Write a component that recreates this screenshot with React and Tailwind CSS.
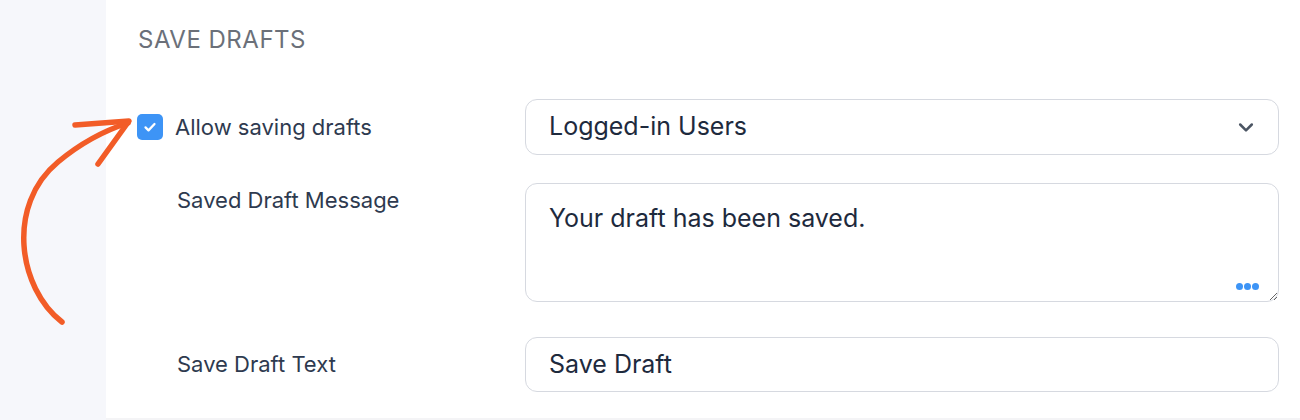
import React from 'react';

function Arrow() {
  return (
    <svg className="absolute left-0 top-0 pointer-events-none" width="170" height="340" viewBox="0 0 170 340" fill="none">
      <path d="M62 322 C18 288 6 205 58 162 C82 142 106 130 128 123" stroke="#f25c27" strokeWidth="5.5" strokeLinecap="round" />
      <path d="M75 125 L129 121 L98 164" stroke="#f25c27" strokeWidth="5.5" strokeLinecap="round" strokeLinejoin="round" />
    </svg>
  );
}

export default function App() {
  return (
    <div className="relative flex w-[1300px] h-[420px] overflow-hidden font-['Inter','Liberation_Sans',sans-serif]">
      <div className="w-[106px] shrink-0 bg-[#f6f7fb]" />
      <div className="flex-1 flex flex-col bg-white">
        <div className="flex-1 pl-[31px] pr-[21px]">
          <h2 className="mt-[26px] ml-[1px] text-[24px] leading-[28px] text-[#6b7079] tracking-[0.5px]">SAVE DRAFTS</h2>

          {/* Allow saving drafts */}
          <div className="flex items-center mt-[45px]">
            <div className="w-[388px] flex items-center gap-[12px]">
              <div className="w-[26px] h-[26px] rounded-[5px] bg-[#3d94f6] flex items-center justify-center">
                <svg width="18" height="18" viewBox="0 0 24 24" fill="none" stroke="white" strokeWidth="3" strokeLinecap="round" strokeLinejoin="round">
                  <path d="M6 12.5l4 4L18 8" />
                </svg>
              </div>
              <span className="text-[22px] text-[#2e3a4f]">Allow saving drafts</span>
            </div>
            <div className="flex-1 h-[56px] border border-[#d6d9e0] rounded-[12px] flex items-center justify-between pl-[23px] pr-[22px]">
              <span className="text-[25px] text-[#1e2a3d]">Logged-in Users</span>
              <svg width="20" height="20" viewBox="0 0 24 24" fill="none" stroke="#4b5563" strokeWidth="3" strokeLinecap="round" strokeLinejoin="round">
                <path d="M5 9l7 7 7-7" />
              </svg>
            </div>
          </div>

          {/* Saved Draft Message */}
          <div className="flex mt-[28px]">
            <div className="w-[388px] pl-[40px] pt-[1px] text-[22px] text-[#2e3a4f]">Saved Draft Message</div>
            <div className="relative flex-1">
              <textarea
                readOnly
                defaultValue="Your draft has been saved."
                className="block w-full h-[119px] border border-[#d6d9e0] rounded-[12px] px-[23px] pt-[16px] text-[25px] text-[#1e2a3d] outline-none resize-y"
              />
              <div className="absolute right-[20px] bottom-[12px] flex gap-[1px]">
                <span className="w-[7px] h-[7px] rounded-full bg-[#3d94f6]" />
                <span className="w-[7px] h-[7px] rounded-full bg-[#3d94f6]" />
                <span className="w-[7px] h-[7px] rounded-full bg-[#3d94f6]" />
              </div>
            </div>
          </div>

          {/* Save Draft Text */}
          <div className="flex items-center mt-[35px]">
            <div className="w-[388px] pl-[40px] text-[22px] text-[#2e3a4f]">Save Draft Text</div>
            <div className="flex-1 h-[55px] border border-[#d6d9e0] rounded-[12px] flex items-center pl-[23px]">
              <span className="text-[25px] text-[#1e2a3d]">Save Draft</span>
            </div>
          </div>
        </div>
        <div className="h-[2px] bg-[#f4f4f6]" />
      </div>
      <Arrow />
    </div>
  );
}
